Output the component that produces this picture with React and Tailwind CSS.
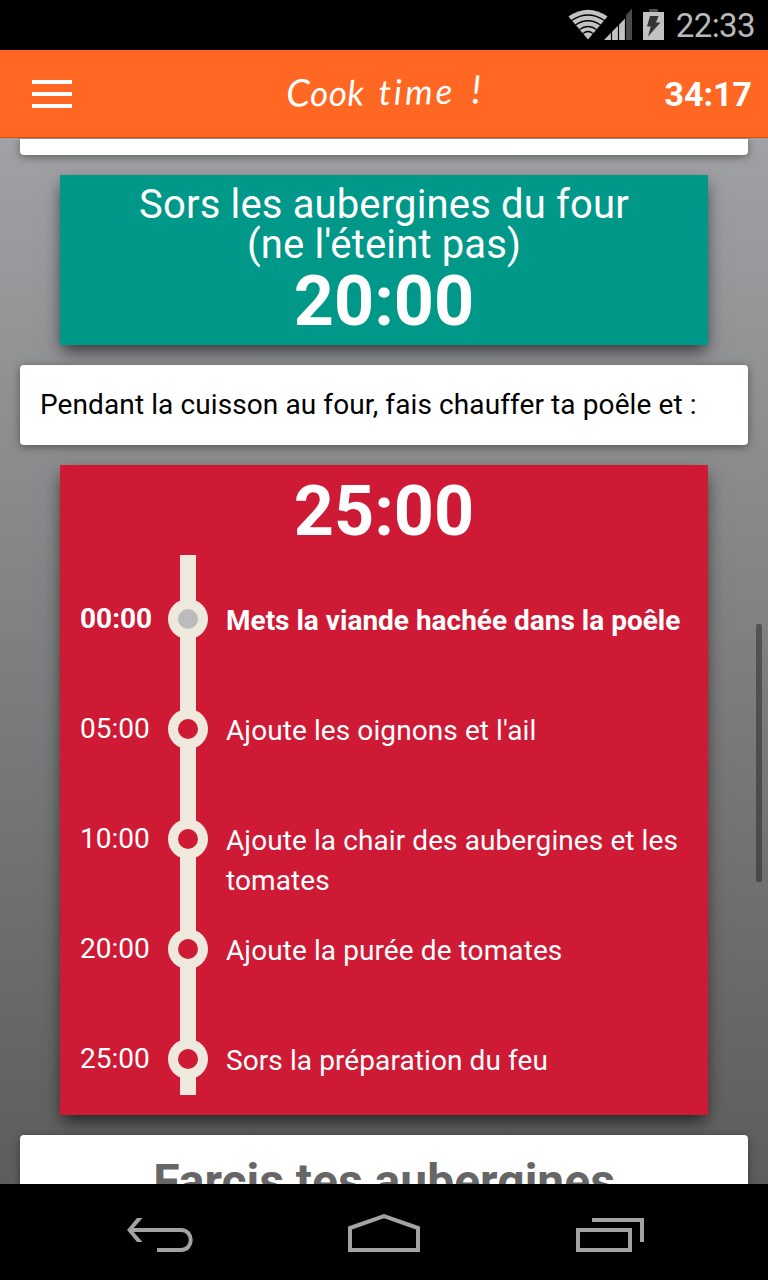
import React from "react";

const steps = [
  { time: "00:00", label: "Mets la viande hachée dans la poêle", active: true },
  { time: "05:00", label: "Ajoute les oignons et l'ail" },
  { time: "10:00", label: "Ajoute la chair des aubergines et les tomates" },
  { time: "20:00", label: "Ajoute la purée de tomates" },
  { time: "25:00", label: "Sors la préparation du feu" },
];

function StatusBar() {
  return (
    <div className="flex h-[50px] shrink-0 items-center justify-end bg-black pr-[13px] text-[#b9b9b9]">
      <svg width="108" height="50" viewBox="560 0 108 50" className="shrink-0">
        <path d="M568.5 16.5Q588 3 607.5 16.5L588 39.5Z" fill="#c2c2c2" />
        <g fill="none" stroke="#000" strokeWidth="1.4">
          <path d="M571.5 20.5Q588 9.5 604.5 20.5" />
          <path d="M575.5 25Q588 16.5 600.5 25" />
          <path d="M579.5 29.5Q588 23.5 596.5 29.5" />
          <path d="M583 33.5Q588 29.5 593 33.5" />
        </g>
        <path d="M604 40L625 18.5V40Z" fill="#c2c2c2" />
        <path d="M625.5 15.5L632 8.5V40H625.5Z" fill="#4b4b4b" />
        <path d="M611.5 28V40M618.5 20V40M625.5 14V40" stroke="#000" strokeWidth="1.2" />
        <path d="M649 9H658V12H649Z" fill="#4b4b4b" />
        <path d="M643 12H664V40H643Z" fill="#c2c2c2" />
        <path d="M650 16H658.5L656 22.5H660.5L648 36.5L650.7 26.5H647Z" fill="#353535" />
      </svg>
      <span className="ml-2 mt-0.5 whitespace-nowrap text-[33px] leading-[48px] tracking-[-0.6px]">22:33</span>
    </div>
  );
}

function Header() {
  return (
    <header className="grid h-22 shrink-0 grid-cols-3 items-center border-b border-[#d94a0c] bg-[#ff6722] px-4 text-white">
      <div className="flex flex-col gap-2 pl-4">
        <div className="h-1 w-10 bg-white" />
        <div className="h-1 w-10 bg-white" />
        <div className="h-1 w-10 bg-white" />
      </div>
      <h1 className="-mt-1.5 flex -rotate-1 items-baseline justify-center whitespace-nowrap font-['Lato',sans-serif] text-[35px] font-normal italic leading-[48px]">
        <span className="text-[38px]">C</span>
        <span className="tracking-[0.5px]">ook</span>
        <span className="ml-3.5 tracking-[3px]">time</span>
        <span className="ml-4 text-[39px]">!</span>
      </h1>
      <div className="text-right text-[34px] font-bold leading-10">34:17</div>
    </header>
  );
}

function Step({ time, label, active }) {
  return (
    <li className={active ? "flex h-[110px] font-bold" : "flex h-[110px]"}>
      <span className="w-[88px] whitespace-nowrap leading-10">{time}</span>
      <span className="flex h-10 w-10 shrink-0 items-center justify-center rounded-full bg-[#efe9dd]">
        <span className={active ? "h-5 w-5 rounded-full bg-[#bbbbbb]" : "h-5 w-5 rounded-full bg-[#cf1a35]"} />
      </span>
      <span className={active ? "ml-[18px] mt-[2px] flex-1 leading-10" : "ml-[18px] mt-[2px] flex-1 leading-10 tracking-[0.09px]"}>{label}</span>
    </li>
  );
}

function NavigationBar() {
  return (
    <nav className="h-24 shrink-0 bg-black">
      <svg width="768" height="96" viewBox="0 1184 768 96" fill="none" stroke="#a3a3a3" strokeWidth="4">
        <path d="M129 1230H181C194 1230 194 1250 181 1250H157" />
        <path d="M137 1218H142.5L132 1230L142.5 1242H137L127 1230Z" fill="#a3a3a3" stroke="none" />
        <path d="M350 1250V1228L384 1216.2L418 1228V1250Z" />
        <path d="M578 1230H630V1250H578Z" />
        <path d="M592 1220H642V1242" />
      </svg>
    </nav>
  );
}

export default function App() {
  return (
    <div className="flex h-[1280px] w-[768px] flex-col overflow-hidden bg-black font-['Roboto',sans-serif]">
      <StatusBar />
      <Header />
      <main className="relative min-h-0 flex-1 overflow-hidden bg-linear-to-b from-[#a0a1a4] to-[#5d5d5d] text-[28px]">
        <div className="flex flex-col gap-5 px-5 pt-[0.5px]">
          <section className="h-4 rounded-b-[4px] bg-white shadow-[0_2px_8px_rgba(0,0,0,0.4)]" />
          <section className="mx-10 h-[170px] bg-[#009888] pt-2.5 text-center text-white shadow-[0_8px_16px_-2px_rgba(0,0,0,0.65)]">
            <p className="text-[40px] leading-10 tracking-[0.15px]">
              Sors les aubergines du four
              <br />
              (ne l'éteint pas)
            </p>
            <p className="mt-px text-[70px] font-bold leading-[70px]">20:00</p>
          </section>
          <section className="flex h-20 items-center rounded-[4px] bg-white px-5 text-black shadow-[0_2px_8px_rgba(0,0,0,0.4)]">
            <p className="whitespace-nowrap leading-10 tracking-[0.1px]">Pendant la cuisson au four, fais chauffer ta poêle et :</p>
          </section>
          <section className="mx-10 h-[650px] bg-[#cf1a35] px-5 pt-[11px] text-white shadow-[0_8px_16px_-2px_rgba(0,0,0,0.65)]">
            <p className="text-center text-[70px] font-bold leading-[70px]">25:00</p>
            <div className="mt-[9px] h-[540px] bg-[linear-gradient(#efe9dd,#efe9dd)] bg-[length:16px_100%] bg-[position:100px_0] bg-no-repeat pt-11">
              <ol>
                {steps.map((step) => (
                  <Step key={step.time} {...step} />
                ))}
              </ol>
            </div>
          </section>
          <section className="h-40 rounded-[4px] bg-white pt-[17px] text-center shadow-[0_2px_8px_rgba(0,0,0,0.4)]">
            <h2 className="text-[48px] font-bold leading-[60px] text-[#666]">Farcis tes aubergines</h2>
          </section>
        </div>
        <div className="absolute right-1.5 top-[486px] h-[258px] w-1.5 rounded-[2px] bg-black/35" />
      </main>
      <NavigationBar />
    </div>
  );
}
